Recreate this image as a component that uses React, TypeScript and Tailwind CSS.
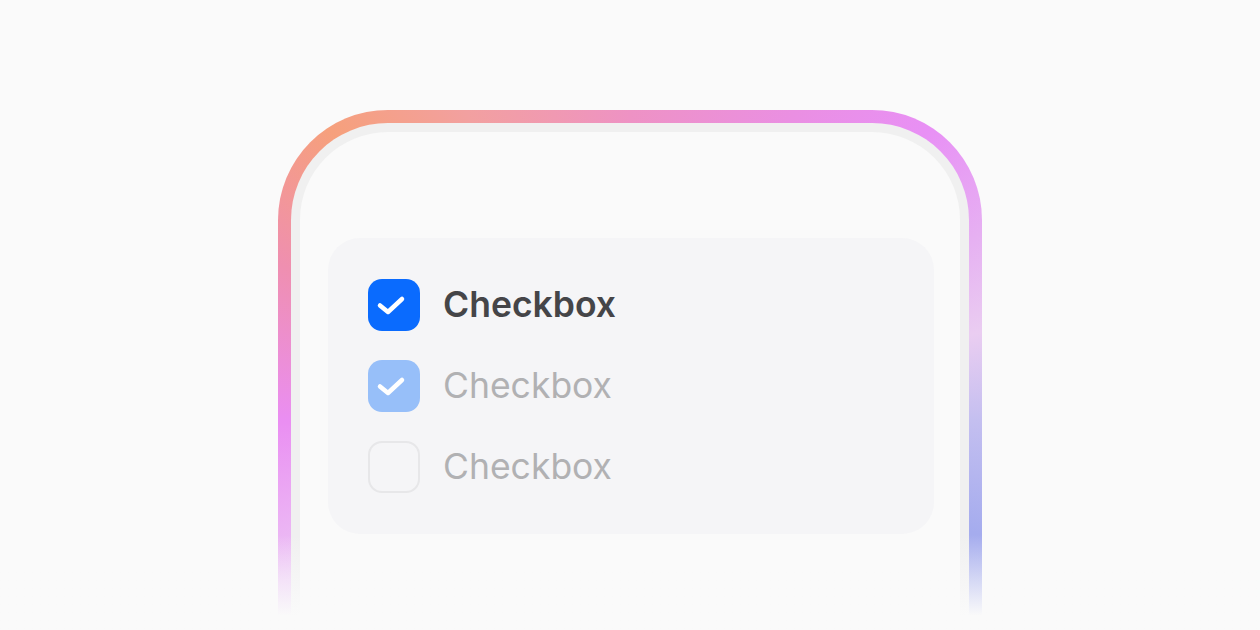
import { Fragment } from "react";

// ─── Types ────────────────────────────────────────────────────────────────────

type CheckState = "checked" | "checked-disabled" | "unchecked";

type Row = {
  label: string;
  state: CheckState;
};

const ROWS: Row[] = [
  { label: "Checkbox", state: "checked" },
  { label: "Checkbox", state: "checked-disabled" },
  { label: "Checkbox", state: "unchecked" },
];

// ─── Check mark ───────────────────────────────────────────────────────────────

const CheckMark = () => (
  <svg viewBox="0 0 52 52" className="h-full w-full" fill="none">
    <path
      d="M12 26.5 L20 33 L34 20"
      stroke="white"
      strokeWidth="4.5"
      strokeLinecap="round"
      strokeLinejoin="round"
    />
  </svg>
);

// ─── Checkbox ─────────────────────────────────────────────────────────────────

const CheckboxBox = ({ state }: { state: CheckState }) => {
  if (state === "checked") {
    return (
      <div className="h-[52px] w-[52px] shrink-0 rounded-[14px] bg-[#0a6bfe]">
        <CheckMark />
      </div>
    );
  }
  if (state === "checked-disabled") {
    return (
      <div className="h-[52px] w-[52px] shrink-0 rounded-[14px] bg-[#97bff9]">
        <CheckMark />
      </div>
    );
  }
  return (
    <div className="h-[52px] w-[52px] shrink-0 rounded-[14px] border-2 border-[#e7e7e9]" />
  );
};

// ─── App ──────────────────────────────────────────────────────────────────────

export default function App() {
  return (
    <div className="relative h-[630px] w-[1260px] overflow-hidden bg-[#fafafa] font-['Inter','Noto_Sans',sans-serif]">
      {/* Device frame */}
      <div className="ml-[278px] mt-[110px] h-[620px] w-[704px] rounded-[110px] bg-[conic-gradient(from_0deg_at_50%_50%,#ee92c4_0deg,#ea8fe2_28deg,#e890f5_46deg,#e6b0f2_62deg,#eacdf1_76deg,#c4bff0_90deg,#a5acee_108deg,#a6b0ee_180deg,#ecc4f5_245deg,#ea8ef2_270deg,#ef8fb0_294deg,#f6a07c_314deg,#f2a0a0_332deg,#ee92c4_360deg)] p-[13px]">
        <div className="h-full w-full rounded-[97px] bg-[#f0f0f0] p-[9px]">
          <div className="h-full w-full rounded-[88px] bg-[#fafafa] pl-[28px] pr-[26px] pt-[106px]">
            {/* Checkbox card */}
            <div className="flex flex-col gap-[29px] rounded-[32px] bg-[#f5f5f7] px-[40px] py-[41px]">
              {ROWS.map((row, i) => (
                <Fragment key={i}>
                  <div className="flex items-center gap-[23px]">
                    <CheckboxBox state={row.state} />
                    <span
                      className={
                        row.state === "checked"
                          ? "text-[35.5px] font-semibold leading-none text-[#454548]"
                          : "text-[35.5px] font-normal leading-none text-[#b1b1b3]"
                      }
                    >
                      {row.label}
                    </span>
                  </div>
                </Fragment>
              ))}
            </div>
          </div>
        </div>
      </div>

      {/* Bottom fade over the frame */}
      <div className="absolute bottom-0 left-0 h-[95px] w-full bg-gradient-to-b from-[#fafafa00] to-[#fafafa] to-85%" />
    </div>
  );
}
